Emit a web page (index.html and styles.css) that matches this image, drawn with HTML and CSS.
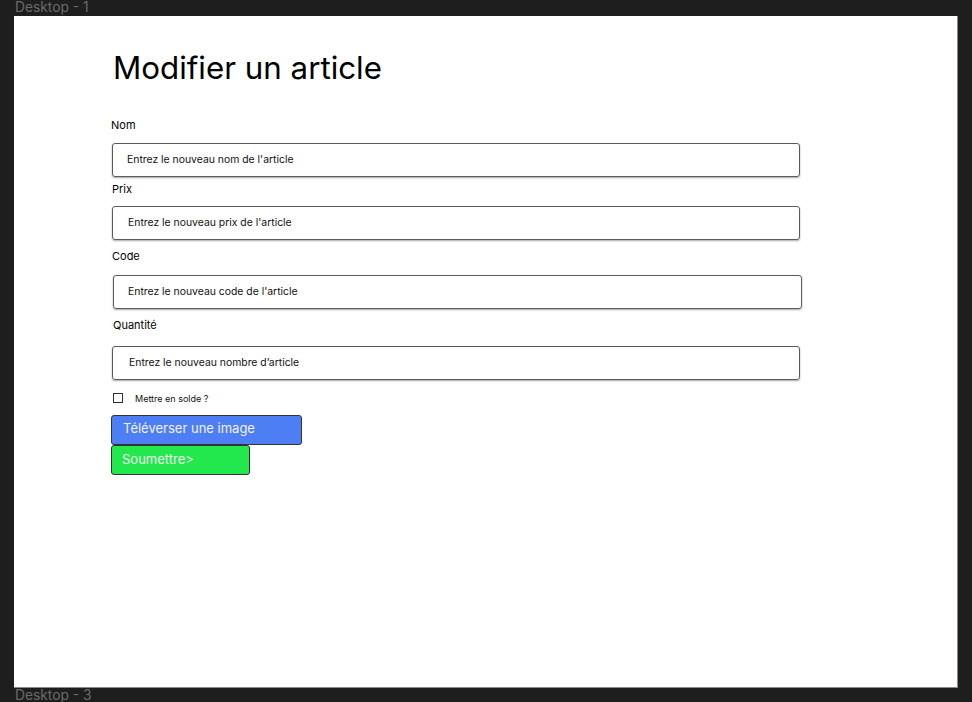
FILE: index.html
```html
<!DOCTYPE html>
<html lang="fr">
<head>
<meta charset="utf-8">
<title>Modifier un article</title>
<link rel="stylesheet" href="styles.css">
</head>
<body>
<div class="canvas">
  <div class="frame-label">Desktop - 1</div>
  <div class="frame">
    <form class="form">
      <h1 class="title">Modifier un article</h1>
      <label class="label l-nom">Nom</label>
      <div class="input i1">Entrez le nouveau nom de l'article</div>
      <label class="label l-prix">Prix</label>
      <div class="input i2">Entrez le nouveau prix de l'article</div>
      <label class="label l-code">Code</label>
      <div class="input i3">Entrez le nouveau code de l'article</div>
      <label class="label l-qte">Quantité</label>
      <div class="input i4">Entrez le nouveau nombre d’article</div>
      <div class="check-row">
        <span class="checkbox"></span>
        <span class="check-text">Mettre en solde ?</span>
      </div>
      <div class="btn btn-blue">Téléverser une image</div>
      <div class="btn btn-green">Soumettre&gt;</div>
    </form>
  </div>
  <div class="frame-label bottom">Desktop - 3</div>
</div>
</body>
</html>
```
FILE: styles.css
```css
html, body {
  margin: 0;
  padding: 0;
  background: #1e1e1e;
  height: 100%;
  overflow: hidden;
}
.canvas {
  padding-left: 14px;
  font-family: Inter, "Liberation Sans", sans-serif;
}
.frame-label {
  height: 16px;
  line-height: 14px;
  font-size: 13.8px;
  color: #6a6a6a;
  padding-left: 1px;
}
.frame-label.bottom {
  height: 14px;
  line-height: 14px;
}
.frame {
  width: 943px;
  height: 671px;
  background: #ffffff;
  border-right: 1px solid #8a8a8a;
  border-bottom: 1px solid #8a8a8a;
  box-sizing: content-box;
}
.form {
  display: flex;
  flex-direction: column;
  align-items: flex-start;
  padding: 33px 0 0 98px;
}
.title {
  margin: 0;
  font-weight: 400;
  font-size: 31.3px;
  line-height: 38px;
  color: #000;
  padding-left: 1px;
}
.label {
  font-size: 11px;
  line-height: 14px;
  color: #000;
}
.l-nom { margin-top: 31px; margin-left: -1px; }
.l-prix { margin-top: 5px; }
.l-code { margin-top: 9px; }
.l-qte { margin-top: 9px; margin-left: 1px; }
.input {
  box-sizing: border-box;
  width: 688px;
  height: 34px;
  border: 1px solid #5a5a5a;
  border-radius: 3px;
  box-shadow: 0 1px 2px rgba(0, 0, 0, 0.35);
  font-size: 10.4px;
  line-height: 31px;
  color: #111;
  padding-left: 14px;
}
.i1 { margin-top: 11px; }
.i2 { margin-top: 10px; padding-left: 15px; }
.i3 { margin-top: 12px; margin-left: 1px; width: 689px; padding-left: 14px; }
.i4 { margin-top: 14px; padding-left: 16px; }
.check-row {
  margin-top: 11px;
  margin-left: 1px;
  display: flex;
  align-items: center;
  height: 14px;
}
.checkbox {
  box-sizing: border-box;
  width: 10px;
  height: 10px;
  border: 1px solid #333;
  background: #fff;
}
.check-text {
  margin-left: 12px;
  font-size: 9px;
  color: #111;
}
.btn {
  box-sizing: border-box;
  border: 1px solid #333;
  border-radius: 3px;
  color: #f2f2f2;
  font-size: 13px;
  margin-left: -1px;
}
.btn-blue {
  margin-top: 10px;
  width: 191px;
  height: 30px;
  line-height: 24px;
  background: #4e7ef4;
  padding-left: 11px;
}
.btn-green {
  width: 139px;
  height: 30px;
  line-height: 27px;
  background: #22e84e;
  padding-left: 10px;
}
```
